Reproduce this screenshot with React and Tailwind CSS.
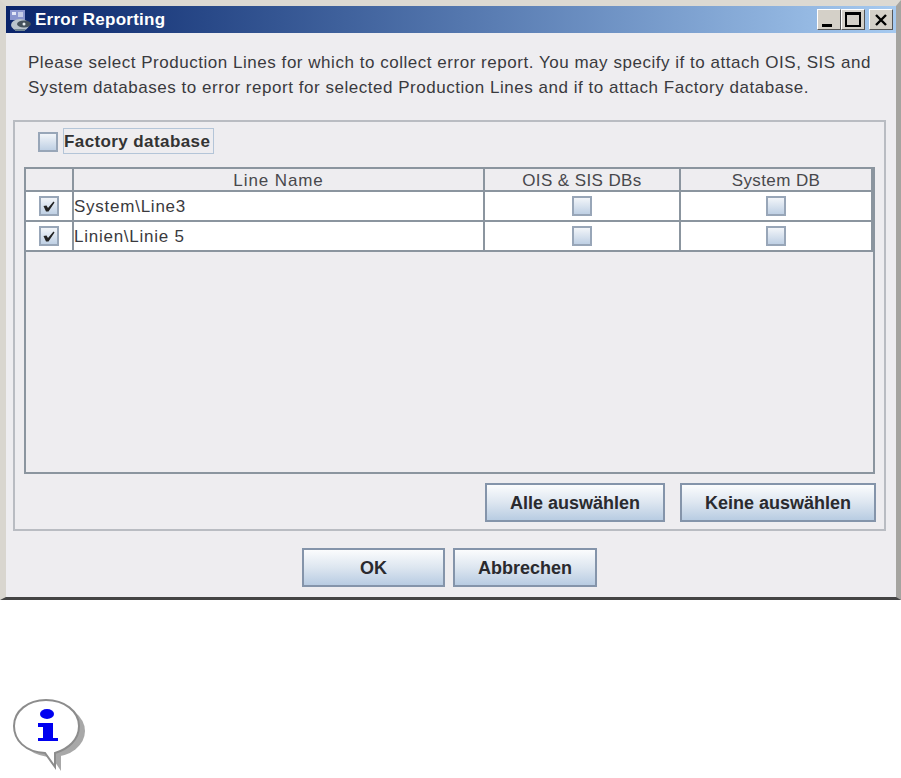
import React from "react";

function JavaCheck({ checked }) {
  return (
    <span className="flex h-[20px] w-[20px] flex-none items-center justify-center border-2 border-[#98a6b8] bg-gradient-to-b from-[#f2f5f9] to-[#bfd0e4]">
      {checked && (
        <svg width="14" height="14" viewBox="0 0 14 14">
          <path d="M1.5 7 L4.5 6.5 L6 9 L11.5 2.5 L12.5 3.5 L6.5 12.5 L4 12.5 Z" fill="#222" />
        </svg>
      )}
    </span>
  );
}

function JavaButton({ className, children }) {
  return (
    <button className={`h-[39px] flex-none border-2 border-[#8494aa] bg-gradient-to-b from-[#fbfcfd] via-[#dde6f0] to-[#b8cce2] pt-[2px] text-[18px] font-bold text-[#2a2a2e] ${className}`}>
      {children}
    </button>
  );
}

function WinButton({ children, className = "" }) {
  return (
    <span className={`flex h-[21px] w-[24px] items-center justify-center border border-t-white border-l-white border-r-[#555] border-b-[#555] bg-[#d4d0c8] ${className}`}>
      {children}
    </span>
  );
}

function TableRow({ name }) {
  return (
    <div className="flex h-[30px] border-b-2 border-[#8b959f] bg-white">
      <div className="flex w-[48px] flex-none items-center justify-center border-r-2 border-[#8b959f]">
        <JavaCheck checked />
      </div>
      <div className="flex w-[411px] flex-none items-center border-r-2 border-[#8b959f] pt-[1px] text-[17px] tracking-[0.75px] text-[#3a3a3e]">
        {name}
      </div>
      <div className="flex w-[196px] flex-none items-center justify-center border-r-2 border-[#8b959f]">
        <JavaCheck />
      </div>
      <div className="flex flex-1 items-center justify-center border-r-2 border-[#8b959f]">
        <JavaCheck />
      </div>
    </div>
  );
}

export default function App() {
  return (
    <div className="h-[778px] w-[901px] bg-white font-['Liberation_Sans',Arial,sans-serif]">
      <div className="flex h-[600px] w-[901px] flex-col border-t-[6px] border-r-[5px] border-b-[3px] border-l-[6px] border-t-[#dcd9d2] border-r-[#a5a4a0] border-b-[#444] border-l-[#d9d6cf] bg-[#eeedf0]">
        <div className="flex h-[27px] flex-none items-center bg-gradient-to-r from-[#0a246a] to-[#a6caf0] pr-[3px] pl-[3px]">
          <svg width="24" height="24" viewBox="0 0 24 24" className="flex-none">
            <rect x="1" y="2" width="15" height="10" fill="#8a96cf" />
            <rect x="3" y="4" width="4" height="3" fill="#e4e8f8" />
            <rect x="9" y="4" width="5" height="5" fill="#c6cde8" />
            <ellipse cx="11" cy="17" rx="9" ry="6" fill="#b9c4cc" />
            <ellipse cx="15" cy="16" rx="7" ry="3.5" fill="#45535c" />
            <circle cx="15" cy="16" r="1.5" fill="#e8eef0" />
            <rect x="6" y="21" width="10" height="2" fill="#6f8592" />
          </svg>
          <span className="ml-[2px] text-[17px] font-bold tracking-[0.25px] text-white">Error Reporting</span>
          <div className="ml-auto flex items-center">
            <WinButton>
              <span className="mt-[11px] -ml-[4px] h-[3px] w-[10px] bg-black" />
            </WinButton>
            <WinButton>
              <span className="h-[15px] w-[16px] border-2 border-t-[3px] border-black" />
            </WinButton>
            <WinButton className="ml-[4px]">
              <svg width="14" height="12" viewBox="0 0 14 12">
                <path d="M2 1 L12 11 M12 1 L2 11" stroke="#000" strokeWidth="2.4" />
              </svg>
            </WinButton>
          </div>
        </div>

        <p className="mt-[17px] h-[70px] flex-none pl-[22px] text-[17px] leading-[25px] tracking-[0.53px] whitespace-nowrap text-[#3a3a3e]">
          Please select Production Lines for which to collect error report. You may specify if to attach OIS, SIS and
          <br />
          System databases to error report for selected Production Lines and if to attach Factory database.
        </p>

        <div className="ml-[7px] h-[411px] w-[873px] flex-none border-2 border-[#b9bcc2] px-[9px] pt-[6px]">
          <div className="flex items-center pl-[14px]">
            <span className="mt-[2px]">
              <JavaCheck />
            </span>
            <span className="ml-[5px] flex h-[26px] items-center border border-[#b4c5d8] pt-[2px] pr-[3px] text-[17px] font-bold tracking-[0.4px] text-[#333]">
              Factory database
            </span>
          </div>
          <div className="mt-[13px] h-[307px] w-[851px] border-2 border-[#8b959f]">
            <div className="flex h-[23px] border-b-2 border-[#8b959f] text-center text-[17px] leading-[24px] tracking-[0.4px] text-[#48484c]">
              <div className="w-[48px] flex-none border-r-2 border-[#8b959f]" />
              <div className="w-[411px] flex-none border-r-2 border-[#8b959f] tracking-[0.9px]">Line Name</div>
              <div className="w-[196px] flex-none border-r-2 border-[#8b959f]">OIS &amp; SIS DBs</div>
              <div className="flex-1 border-r-2 border-[#8b959f]">System DB</div>
            </div>
            <TableRow name="System\Line3" />
            <TableRow name="Linien\Linie 5" />
          </div>
          <div className="mt-[9px] -mr-[1px] flex justify-end gap-[15px]">
            <JavaButton className="w-[180px]">Alle auswählen</JavaButton>
            <JavaButton className="w-[196px]">Keine auswählen</JavaButton>
          </div>
        </div>

        <div className="mt-[17px] flex justify-center gap-[8px] pr-[3px]">
          <JavaButton className="w-[143px]">OK</JavaButton>
          <JavaButton className="w-[144px]">Abbrechen</JavaButton>
        </div>
      </div>

      <svg width="76" height="76" viewBox="0 0 76 76" className="mt-[98px] ml-[12px]">
        <g fill="#a8a8a8">
          <ellipse cx="40" cy="33" rx="33" ry="26" />
          <path d="M39 58 L49 73 L49 58 Z" />
        </g>
        <path
          d="M33 55 C13 54 2 42 2 28 C2 13 16 2 34 2 C52 2 67 13 67 28 C67 42 56 51 43 55 L43 69 Z"
          fill="#fff"
          stroke="#8c8c8c"
          strokeWidth="2"
        />
        <ellipse cx="35" cy="16" rx="7" ry="5" fill="#0000f0" />
        <path d="M26 25 H41 V40 H46 V43 H26 V40 H31 V29 H26 Z" fill="#0000f0" />
      </svg>
    </div>
  );
}
